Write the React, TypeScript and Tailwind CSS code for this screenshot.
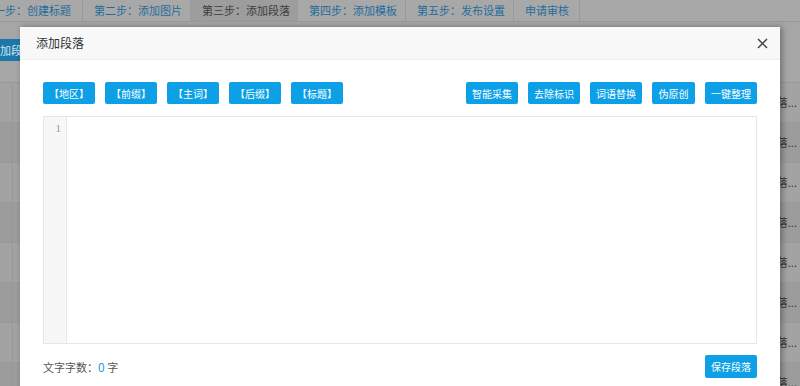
import React from 'react';

const steps = [
  { label: '一步：创建标题', w: 'w-[83px]', first: true },
  { label: '第二步：添加图片', w: 'w-[108px]' },
  { label: '第三步：添加段落', w: 'w-[107px]', active: true },
  { label: '第四步：添加模板', w: 'w-[108px]' },
  { label: '第五步：发布设置', w: 'w-[108px]' },
  { label: '申请审核', w: 'w-[66px]' },
];

const leftTags = ['【地区】', '【前缀】', '【主词】', '【后缀】', '【标题】'];
const rightTools = [
  { label: '智能采集', w: 'w-[52px]' },
  { label: '去除标识', w: 'w-[52px]' },
  { label: '词语替换', w: 'w-[52px]' },
  { label: '伪原创', w: 'w-[43px]' },
  { label: '一键整理', w: 'w-[52px]' },
];

const font = { fontFamily: '"Noto Sans CJK SC", "Liberation Sans", sans-serif' };

const BackgroundPage: React.FC = () => (
  <div className="w-[800px] h-[386px] bg-[#a6a6a6] overflow-hidden">
    {/* 步骤导航 */}
    <div className="h-[22px] flex items-stretch bg-[#a8a8a8] border-b border-[#999]">
      {steps.map((s) => (
        <div
          key={s.label}
          className={`${s.w} shrink-0 flex items-center text-[11px] border-r border-[#9a9a9a] whitespace-nowrap overflow-hidden ${
            s.first ? 'justify-end pr-[11px]' : 'pl-[11px]'
          } ${s.active ? 'bg-[#9d9d9d] text-[#3c3c3c]' : 'text-[#1f6d9c]'}`}
        >
          <span className="shrink-0">{s.label}</span>
        </div>
      ))}
    </div>
    <div className="h-[17px]" />
    <div className="h-[22px] w-fit -ml-[21px] px-[10px] bg-[#1b78a9] text-[#d6e6ef] text-[11px] flex items-center">
      添加段落
    </div>
    <div className="h-[21px]" />
    {[0, 1, 2, 3, 4, 5, 6, 7].map((i) => (
      <div
        key={i}
        className={`h-[40px] border-t border-[#999] flex items-center justify-end text-[11px] text-[#3a3a3a] ${
          i % 2 === 0 ? 'bg-[#a3a3a3]' : 'bg-[#9c9c9c]'
        }`}
      >
        <div className="w-[13px] h-full border-r border-[#989898] mr-auto" />
        <span className="pr-[3px]">落...</span>
      </div>
    ))}
  </div>
);

const BlueButton: React.FC<{ label: string; className?: string }> = ({ label, className }) => (
  <button
    type="button"
    className={`h-[22px] rounded-[2px] bg-[#0ea0e6] text-white text-[10px] flex items-center justify-center whitespace-nowrap ${className ?? 'w-[52px]'}`}
  >
    {label}
  </button>
);

const App: React.FC = () => {
  return (
    <div className="relative w-[800px] h-[386px] overflow-hidden" style={font}>
      <BackgroundPage />

      {/* 添加段落 弹窗 */}
      <div className="absolute left-[20px] top-[27px] w-[760px] h-[390px] bg-white shadow-[2px_0_6px_rgba(0,0,0,0.35)] flex flex-col">
        <div className="h-[33px] bg-[#f8f8f8] border-b border-[#eeeeee] flex items-center justify-between pl-[16px] pr-[12px]">
          <span className="text-[12px] text-[#333]">添加段落</span>
          <svg width="11" height="11" viewBox="0 0 11 11" className="text-[#444]">
            <path d="M1 1 L10 10 M10 1 L1 10" stroke="currentColor" strokeWidth="1.5" />
          </svg>
        </div>

        <div className="px-[23px] pt-[22px] flex flex-col">
          <div className="flex items-center justify-between">
            <div className="flex gap-[10px]">
              {leftTags.map((t) => (
                <BlueButton key={t} label={t} />
              ))}
            </div>
            <div className="flex gap-[10px]">
              {rightTools.map((t) => (
                <BlueButton key={t.label} label={t.label} className={t.w} />
              ))}
            </div>
          </div>

          {/* 编辑器 */}
          <div className="mt-[12px] h-[228px] border border-[#e6e6e6] flex">
            <div
              className="w-[23px] bg-[#f7f7f7] border-r border-[#e8e8e8] text-right pr-[5px] pt-[3px] text-[11px] text-[#999]"
              style={{ fontFamily: '"Liberation Serif", serif' }}
            >
              1
            </div>
            <div className="flex-1" />
          </div>

          <div className="mt-[11px] flex items-center justify-between">
            <span className="text-[11px] text-[#555]">
              文字字数：<span className="text-[#1ea0e6] text-[12px]">0</span> 字
            </span>
            <BlueButton label="保存段落" className="w-[52px] h-[23px]" />
          </div>
        </div>
      </div>
    </div>
  );
};

export default App;
